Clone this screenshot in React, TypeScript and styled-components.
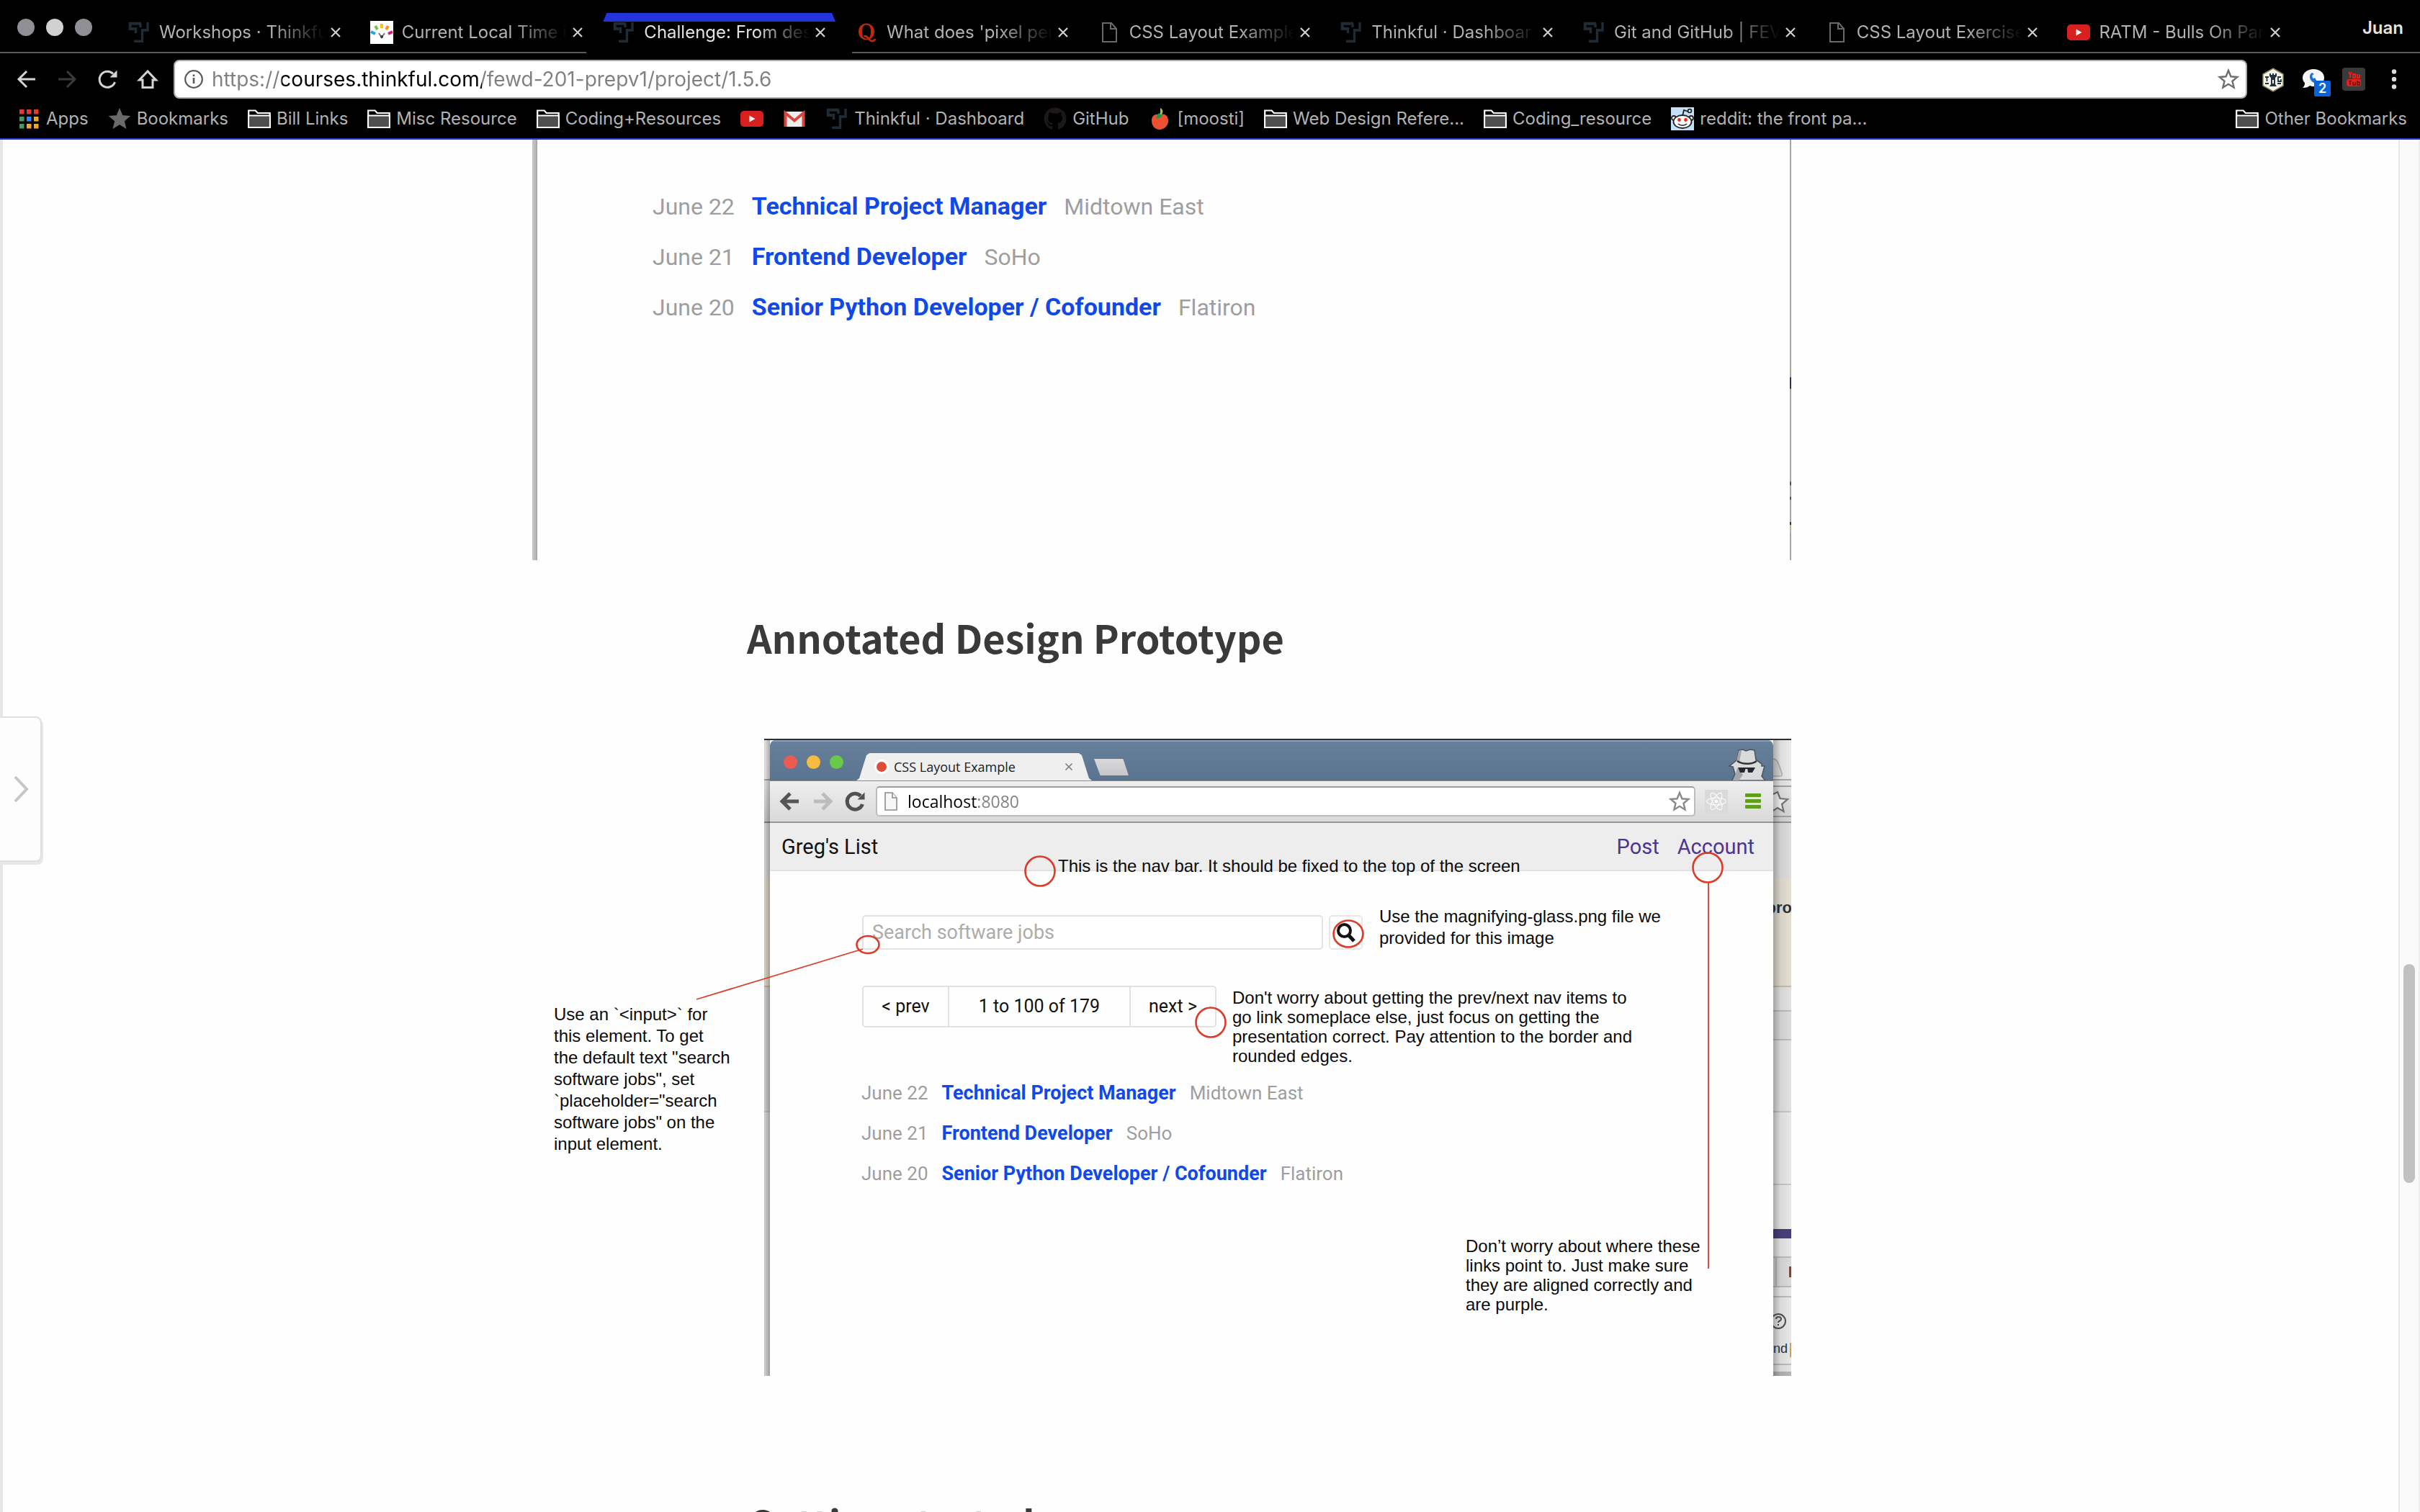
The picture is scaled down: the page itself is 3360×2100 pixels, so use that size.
import React from 'react';
import styled, { createGlobalStyle, css } from 'styled-components';
import { FaGithub, FaReact } from 'react-icons/fa';

const ui = `Inter, "Liberation Sans", sans-serif`;
const roboto = `Roboto, "Liberation Sans", sans-serif`;
const arial = `"Liberation Sans", Arial, sans-serif`;
const humanist = `"Open Sans", "Noto Sans", sans-serif`;
const heading = `"Noto Sans CJK SC", "Noto Sans", sans-serif`;

const GlobalStyle = createGlobalStyle`
  * { box-sizing: border-box; }
  html, body { margin: 0; padding: 0; background: #fefefe; }
  a { color: inherit; text-decoration: none; }
  button { border: 0; padding: 0; margin: 0; background: none; font: inherit; color: inherit; }
  svg { display: block; flex: none; }
`;

/* ---------- browser frame ---------- */

const Screen = styled.div`
  display: flex;
  flex-direction: column;
  height: 100vh;
  overflow: hidden;
  font-family: ${ui};
`;

const Chrome = styled.header`
  flex: none;
  background: #000;
  color: #b2b2b2;
  font-size: 24px;
  border-bottom: 2px solid #2a38dc;
`;

const TabStrip = styled.div`
  display: flex;
  align-items: flex-start;
  height: 74px;
  border-bottom: 2px solid #5c5c5c;
`;

const WindowButtons = styled.div`
  display: flex;
  flex: none;
  gap: 16px;
  width: 155px;
  padding: 26px 0 0 24px;
`;

const WindowDot = styled.button<{ $lit?: boolean }>`
  width: 24px;
  height: 24px;
  border-radius: 50%;
  background: ${(p) => (p.$lit ? '#d1d1d1' : '#8f8f94')};
`;

const Tabs = styled.nav`
  display: flex;
  flex: 1;
  min-width: 0;
  padding-top: 18px;
`;

const Tab = styled.div<{ $active?: boolean }>`
  position: relative;
  display: flex;
  align-items: center;
  flex: 1 1 0;
  min-width: 0;
  height: 54px;
  padding: 0 12px 0 22px;
  ${(p) =>
    p.$active &&
    css`
      color: #e2e2e2;
      &::before {
        content: '';
        position: absolute;
        top: 0;
        left: 9px;
        right: 5px;
        height: 12px;
        background: #2234da;
        clip-path: polygon(5px 0, calc(100% - 5px) 0, 100% 100%, 0 100%);
      }
      &::after {
        content: '';
        position: absolute;
        bottom: -2px;
        left: -14px;
        right: -18px;
        height: 2px;
        background: #000;
      }
    `}
`;

const TabTitle = styled.a`
  flex: 1;
  min-width: 0;
  margin-left: 12px;
  white-space: nowrap;
  line-height: 32px;
  mask-image: linear-gradient(to right, #000 calc(100% - 76px), transparent);
`;

const TabClose = styled.button`
  display: grid;
  place-items: center;
  flex: none;
  width: 28px;
  height: 28px;
`;

const Profile = styled.button`
  flex: none;
  width: 175px;
  padding-right: 23px;
  line-height: 78px;
  text-align: right;
  font-weight: 600;
  color: #e4e4e4;
`;

const Toolbar = styled.div`
  display: flex;
  align-items: center;
  gap: 24px;
  height: 72px;
  padding: 0 20px 0 21px;
`;

const IconButton = styled.button<{ $wide?: boolean }>`
  position: relative;
  display: grid;
  place-items: center;
  flex: none;
  width: ${(p) => (p.$wide ? 44 : 32)}px;
  height: 32px;
`;

const CountBadge = styled.span`
  position: absolute;
  left: 17px;
  top: 18px;
  width: 23px;
  border-radius: 2px;
  background: #0b63dc;
  color: #fff;
  font-size: 18px;
  font-weight: 600;
  line-height: 22px;
  text-align: center;
`;

const AddressBar = styled.label`
  display: flex;
  align-items: center;
  flex: 1;
  gap: 12px;
  height: 54px;
  margin: 0 -4px;
  padding: 0 8px 0 13px;
  border: 2px solid #a9adab;
  border-radius: 8px;
  background: #fff;
`;

const UrlInput = styled.input<{ $from: number; $to: number; $size: number; $font: string }>`
  flex: 1;
  min-width: 0;
  border: 0;
  padding: 0;
  outline: none;
  font-family: ${(p) => p.$font};
  font-size: ${(p) => p.$size}px;
  line-height: 36px;
  color: transparent;
  background: linear-gradient(
    to right,
    #808080 ${(p) => p.$from}px,
    #000 ${(p) => p.$from}px,
    #000 ${(p) => p.$to}px,
    #808080 ${(p) => p.$to}px
  );
  background-clip: text;
  -webkit-background-clip: text;
`;

const BookmarksBar = styled.nav`
  display: flex;
  align-items: center;
  gap: 27px;
  height: 46px;
  padding: 0 18px 8px 24px;
`;

const Bookmark = styled.a<{ $last?: boolean }>`
  display: flex;
  align-items: center;
  gap: 8px;
  line-height: 32px;
  white-space: nowrap;
  margin-left: ${(p) => (p.$last ? 'auto' : '0')};
`;

/* ---------- page ---------- */

const Page = styled.div`
  position: relative;
  display: flex;
  flex: 1;
  min-height: 0;
  background: #fefefe;
`;

const PageEdge = styled.div`
  width: 4px;
  background: #e5e5e5;
`;

const Main = styled.main`
  display: grid;
  grid-template-columns: 735fr 1748fr 843fr;
  align-items: start;
  flex: 1;
  min-width: 0;
  overflow: hidden;
`;

const Article = styled.article`
  grid-column: 2;
  min-width: 0;
`;

const DrawerHandle = styled.button`
  position: absolute;
  left: 0;
  top: 42%;
  display: grid;
  place-items: center;
  width: 58px;
  height: 202px;
  border: 2px solid #e0e0e0;
  border-left: 0;
  border-radius: 0 8px 8px 0;
  background: #fdfdfd;
  box-shadow: 2px 4px 0 #e8e8e8;
`;

const ScrollTrack = styled.div`
  display: grid;
  grid-template-rows: 1145fr 304fr 457fr;
  justify-content: center;
  width: 30px;
  border-left: 2px solid #e8e8e8;
  border-right: 2px solid #efefef;
  background: #fafafa;
`;

const ScrollThumb = styled.div`
  grid-row: 2;
  width: 16px;
  border-radius: 8px;
  background: #c1c1c1;
`;

const SectionTitle = styled.h2`
  margin: 0;
  padding: 67px 0 101px 298px;
  font-family: ${heading};
  font-size: 54px;
  font-weight: 700;
  line-height: 80px;
  color: #3a3b38;
  white-space: nowrap;
`;

const PlainFigure = styled.figure`
  display: grid;
  grid-template-columns: 7px 1fr 2px;
  height: 584px;
  margin: 0;
`;

const LeftRail = styled.div`
  background: linear-gradient(to right, #c6c6c6, #b8b8b8 70%, #9c9c9c);
`;

const RightRail = styled.div`
  background: linear-gradient(
    to bottom,
    #a6a6a6 330px, #332c5c 330px, #332c5c 346px,
    #a6a6a6 346px, #a6a6a6 475px, #555 475px, #555 480px,
    #a6a6a6 480px, #a6a6a6 496px, #555 496px, #555 500px,
    #a6a6a6 500px, #a6a6a6 531px, #333 531px, #333 535px,
    #bdb48f 535px, #bdb48f 545px, #a6a6a6 545px
  );
`;

/* ---------- job list, in two scales ---------- */

const JobList = styled.ul<{ $large?: boolean }>`
  margin: 0;
  padding: ${(p) => (p.$large ? '57px 0 0 160px' : '63px 0 0 127px')};
  list-style: none;
  font-family: ${roboto};
  line-height: ${(p) => (p.$large ? 70 : 56)}px;
  font-size: ${(p) => (p.$large ? 32 : 26)}px;
`;

const JobRow = styled.li<{ $large?: boolean }>`
  display: flex;
  align-items: baseline;
  gap: ${(p) => (p.$large ? 24 : 19)}px;
  height: ${(p) => (p.$large ? 70 : 56)}px;
  color: #9e9e9e;
  white-space: nowrap;
`;

const JobTitle = styled.a<{ $large?: boolean }>`
  font-size: ${(p) => (p.$large ? 34 : 27)}px;
  font-weight: 700;
  color: #1149e8;
`;

/* ---------- annotated prototype ---------- */

const AnnotatedFigure = styled.figure`
  position: relative;
  display: grid;
  grid-template-columns: 8px 1fr 25px;
  height: 885px;
  margin: 0 0 97px 322px;
  border-top: 2px solid #2c3034;
`;

const Backdrop = styled.div<{ $right?: boolean }>`
  position: relative;
  display: flex;
  flex-direction: column;
  overflow: hidden;
  font-family: ${arial};
  font-size: 22px;
  color: #333;
  background: #dcdcdc;
  &::after {
    content: '';
    position: absolute;
    inset: 0;
    background: linear-gradient(
      to ${(p) => (p.$right ? 'left' : 'right')},
      rgba(0, 0, 0, ${(p) => (p.$right ? 0.04 : 0.12)}),
      rgba(0, 0, 0, 0.1) ${(p) => (p.$right ? '60%' : '20%')},
      rgba(0, 0, 0, 0.3)
    );
  }
`;

const Slice = styled.div<{ $h: number; $bg: string; $line?: string }>`
  flex: none;
  height: ${(p) => p.$h}px;
  overflow: hidden;
  background: ${(p) => p.$bg};
  border-bottom: ${(p) => (p.$line ? `2px solid ${p.$line}` : '0')};
  white-space: nowrap;
`;

const SliceText = styled.div<{ $bold?: boolean }>`
  display: flex;
  justify-content: ${(p) => (p.$bold ? 'flex-end' : 'space-between')};
  width: 26px;
  padding-top: ${(p) => (p.$bold ? 19 : 1)}px;
  line-height: 44px;
  font-size: ${(p) => (p.$bold ? 22 : 18)}px;
  font-weight: ${(p) => (p.$bold ? 700 : 400)};
`;

const Marker = styled.span`
  width: 3px;
  height: 20px;
  margin-top: 14px;
  background: #dba55a;
`;

const MockWindow = styled.div`
  min-width: 0;
  overflow: hidden;
  border-radius: 8px 8px 0 0;
  background: #fefefe;
`;

const MockTitleBar = styled.div`
  display: flex;
  align-items: flex-end;
  height: 56px;
  padding: 0 10px 0 19px;
  background: linear-gradient(#67809c, #5a7490);
  box-shadow: inset 0 2px 0 #8ba0b6;
`;

const MockDots = styled.div`
  display: flex;
  gap: 13px;
  width: 101px;
  padding-bottom: 16px;
`;

const MockDot = styled.span<{ $color: string }>`
  width: 19px;
  height: 19px;
  border-radius: 50%;
  background: ${(p) => p.$color};
`;

const MockTab = styled.div`
  display: flex;
  align-items: center;
  width: 327px;
  height: 38px;
  padding: 0 26px 0 28px;
  gap: 10px;
  background: #efefef;
  clip-path: polygon(0 100%, 4px 92%, 14px 8%, 18px 0, 309px 0, 313px 8%, 323px 92%, 100% 100%);
  font-family: ${humanist};
  font-size: 18px;
  line-height: 24px;
  color: #222;
`;

const RecordDot = styled.span`
  width: 14px;
  height: 14px;
  border-radius: 50%;
  background: #df4d38;
  box-shadow: 0 0 0 3px #fff;
`;

const MockTabName = styled.span`
  flex: 1;
`;

const NewTab = styled.button`
  width: 48px;
  height: 23px;
  margin: 0 auto 7px 3px;
  background: linear-gradient(#d9d9db, #c6c6c9);
  clip-path: polygon(0 0, 84% 0, 100% 100%, 18% 100%);
`;

const MockToolbar = styled.div`
  display: flex;
  align-items: center;
  gap: 13px;
  height: 59px;
  padding: 0 6px 0 12px;
  background: linear-gradient(#efefef, #d9d9d9);
  border-top: 1px solid #8c8c8c;
  border-bottom: 2px solid #989898;
`;

const MockAddress = styled.label`
  display: flex;
  align-items: center;
  flex: 1;
  gap: 14px;
  height: 42px;
  padding: 0 4px 0 10px;
  border: 2px solid #bcbcbc;
  border-top-color: #9d9d9d;
  border-radius: 5px;
  background: #fff;
`;

const MockNav = styled.nav`
  display: flex;
  align-items: center;
  gap: 25px;
  height: 67px;
  padding: 0 26px 0 16px;
  background: #ededed;
  border-bottom: 2px solid #e2e2e2;
  font-family: ${roboto};
  font-size: 29px;
  line-height: 36px;
  color: #111;
`;

const Brand = styled.span`
  flex: 1;
`;

const NavLink = styled.a`
  color: #4c3591;
`;

const SearchRow = styled.form`
  display: flex;
  gap: 8px;
  padding: 61px 0 0 128px;
`;

const SearchInput = styled.input`
  width: 640px;
  height: 48px;
  padding: 0 12px;
  border: 2px solid #e2e2e2;
  border-radius: 5px;
  background: #fff;
  font-family: ${roboto};
  font-size: 27px;
  &::placeholder {
    color: #acacac;
    opacity: 1;
  }
`;

const SearchButton = styled.button`
  display: grid;
  place-items: center;
  width: 47px;
  height: 48px;
  border: 2px solid #e8e8e8;
  border-radius: 5px;
`;

const Pager = styled.div`
  display: flex;
  width: 492px;
  height: 58px;
  margin: 50px 0 0 128px;
  border: 2px solid #e2e2e2;
  border-radius: 5px;
  font-family: ${roboto};
  font-size: 25px;
  line-height: 54px;
  color: #111;
  text-align: center;
`;

const PagerButton = styled.button`
  width: 117px;
`;

const PagerStatus = styled.span`
  flex: 1;
  border: solid #e2e2e2;
  border-width: 0 2px;
`;

const Markup = styled.svg`
  position: absolute;
  left: 0;
  top: -2px;
  overflow: visible;
`;

/* notes are pinned on the figure at the spot they talk about */
const Note = styled.p<{ $x: number; $y: number; $w: number; $loose?: boolean }>`
  position: absolute;
  left: ${(p) => p.$x}px;
  top: ${(p) => p.$y}px;
  width: ${(p) => p.$w}px;
  margin: 0;
  font-family: ${arial};
  font-size: 24px;
  line-height: ${(p) => (p.$loose ? 30 : 27)}px;
  color: #0a0a0a;
  white-space: pre-line;
`;

/* ---------- icons ---------- */

const ThinkfulIcon = () => (
  <svg width="32" height="32" viewBox="0 0 32 32" fill="none" stroke="#1f2c36" strokeWidth="3.4">
    <path d="M19 3.7H3.7V11H11" strokeWidth="4" />
    <path d="M18 3.7V9M22 13h6V2M20.5 11v17.3H9" />
    <path d="M11.5 9v8" />
  </svg>
);

const ClockIcon = () => (
  <svg width="32" height="32" viewBox="0 0 32 32">
    <rect width="32" height="32" fill="#fff" />
    <g strokeWidth="4">
      <path d="M16 4v6" stroke="#fdc20f" />
      <path d="M7 7l3 5" stroke="#7ac143" />
      <path d="M25 7l-3 5" stroke="#f7941e" />
      <path d="M1 15l6 3" stroke="#1ea7e1" />
      <path d="M31 15l-6 3" stroke="#e6177c" />
    </g>
    <path d="M12 17l4 6 4-6" fill="none" stroke="#777" strokeWidth="2" />
    <circle cx="16" cy="22" r="2" fill="#333" />
  </svg>
);

const QuoraIcon = () => (
  <svg width="32" height="32" viewBox="0 0 32 32" fill="none" stroke="#b92b0c">
    <path
      d="M16 3.500c6.500 0 11 5 11 11.500s-4.500 11.500-11 11.500S5 21.500 5 15 9.500 3.500 16 3.500zM16 5.500c-4 0-6 3-6 9.500s2 9.500 6 9.500 6-3 6-9.500-2-9.500-6-9.500z"
      fill="#b92b0c"
      fillRule="evenodd"
      stroke="none"
    />
    <path d="M12.500 21.500c6-3 6 7.500 12 6.500 2 0 3-1 3.500-3" strokeWidth="2.800" />
  </svg>
);

const PageIcon = ({ stroke = '#6a6a6a', fill = 'none' }: { stroke?: string; fill?: string }) => (
  <svg width="32" height="32" viewBox="0 0 32 32" fill={fill} stroke={stroke} strokeWidth="2">
    <path d="M7 3h12l7 8v18H7z" />
    <path d="M18 3v8h8" />
  </svg>
);

const YouTubeIcon = () => (
  <svg width="32" height="32" viewBox="0 0 32 32">
    <rect y="5" width="32" height="22" rx="5" fill="#d8211f" />
    <path d="M12.500 11.500v9l8-4.500z" fill="#fff" />
  </svg>
);

const CrossIcon = ({ size = 16, color = '#d0d0d0' }: { size?: number; color?: string }) => (
  <svg width={size} height={size} viewBox="0 0 16 16" stroke={color} strokeWidth="2.2">
    <path d="M2 2l12 12M14 2L2 14" />
  </svg>
);

const ArrowIcon = ({ flip, color, width = 3 }: { flip?: boolean; color: string; width?: number }) => (
  <svg width="32" height="32" viewBox="0 0 32 32" fill="none" stroke={color} strokeWidth={width}>
    <path d={flip ? 'M4 16h22M16 5l11 11-11 11' : 'M28 16H6M16 5L5 16l11 11'} />
  </svg>
);

const ReloadIcon = ({ color, width = 3 }: { color: string; width?: number }) => (
  <svg width="32" height="32" viewBox="0 0 32 32" fill="none" stroke={color} strokeWidth={width}>
    <path d="M26.500 20A11 11 0 1 1 24 8.500" />
    <path d="M29.500 3.500v10h-10z" fill={color} stroke="none" />
  </svg>
);

const HomeIcon = () => (
  <svg width="32" height="32" viewBox="0 0 32 32" fill="none" stroke="#d4d4d4" strokeWidth="3">
    <path d="M16 5L4.500 17H9v10.500h14V17h4.500z" />
  </svg>
);

const InfoIcon = () => (
  <svg width="26" height="26" viewBox="0 0 26 26" fill="none" stroke="#5a5a5a" strokeWidth="2.2">
    <circle cx="13" cy="13" r="11.800" />
    <path d="M13 11v8M13 6.500v2.500" strokeWidth="2.600" />
  </svg>
);

const StarIcon = ({ fill = 'none', stroke = '#6e6e6e' }: { fill?: string; stroke?: string }) => (
  <svg width="32" height="32" viewBox="0 0 32 32" fill={fill} stroke={stroke} strokeWidth="2.4">
    <path d="M16 4l3.400 8.300 8.900.7-6.800 5.800 2.100 8.700-7.600-4.700-7.600 4.700 2.100-8.700-6.800-5.800 8.900-.7z" />
  </svg>
);

const CastleIcon = () => (
  <svg width="32" height="34" viewBox="0 0 32 34">
    <path d="M16 1l14 8v16l-14 8-14-8V9z" fill="#f4f4ee" stroke="#8d8253" strokeWidth="1.500" />
    <path d="M11 8h2v2h2V8h2v2h2V8h2v4l-2 2v9l2 3H11l2-3v-9l-2-2z" fill="#25313c" />
    <path d="M5 13h5M7.500 13v6M27 13h-4v6h4v-3M5 22h5M22 22h5" stroke="#25313c" strokeWidth="1.800" fill="none" />
    <path d="M16 17v5" stroke="#fff" strokeWidth="2" />
  </svg>
);

const ChatIcon = () => (
  <svg width="32" height="32" viewBox="0 0 32 32">
    <path d="M16 2c9 0 15 5 15 12s-6 12-13 12c-3 0-5 0-7-1-2 2-5 3-10 3 3-3 3-5 3-7-2-2-3-4-3-7C1 7 8 2 16 2z" fill="#f7f7f7" />
    <path d="M14 7c-5 3-4 11 3 14l4-2-3-5-2 1c-2-2-2-3-1-5l2-1z" fill="#1e6fd6" />
  </svg>
);

const DownloaderIcon = () => (
  <svg width="32" height="32" viewBox="0 0 32 32">
    <rect width="32" height="32" rx="4" fill="#3a3a3c" />
    <path d="M9 6l2 4v4M13 6l-2 4M15 9h3v5h-3zM21 9v5h3V9" stroke="#e0221c" strokeWidth="2" fill="none" />
    <rect x="6" y="16" width="20" height="10" rx="3" fill="#e0221c" />
    <path d="M9 18.500h4M11 18.500V24M15 20v4h3v-4M21 18v6h3v-4h-3" stroke="#6b1512" strokeWidth="1.500" fill="none" />
  </svg>
);

const DotsIcon = () => (
  <svg width="32" height="32" viewBox="0 0 32 32" fill="#dcdcdc">
    <circle cx="16" cy="5.500" r="3.200" />
    <circle cx="16" cy="16" r="3.200" />
    <circle cx="16" cy="26.500" r="3.200" />
  </svg>
);

const AppsIcon = () => (
  <svg width="32" height="32" viewBox="0 0 32 32">
    {['#e8372b', '#e8372b', '#e8372b', '#3f9c5b', '#2d8cf0', '#efa62b', '#3f9c5b', '#efa62b', '#efa62b'].map((c, i) => (
      <rect key={i} x={3 + (i % 3) * 10} y={3 + Math.floor(i / 3) * 10} width="6.500" height="6.500" fill={c} />
    ))}
  </svg>
);

const FolderIcon = () => (
  <svg width="32" height="32" viewBox="0 0 32 32">
    <path d="M1.200 27.500V4.500h9.500l3 3.500h17v19.500z" fill="#000" stroke="#fff" strokeWidth="2.200" />
    <path d="M1 11.500h30V28H1z" fill="#4f4f4f" stroke="#fff" strokeWidth="2.200" />
  </svg>
);

const GmailIcon = () => (
  <svg width="32" height="32" viewBox="0 0 32 32">
    <rect x="2" y="6" width="28" height="21" rx="2" fill="#ececec" />
    <path d="M3.500 27V8L16 18.500 28.500 8v19" fill="none" stroke="#d9453a" strokeWidth="4" />
  </svg>
);

const PeachIcon = () => (
  <svg width="32" height="32" viewBox="0 0 32 32">
    <path d="M16 10c9-2 12 3 12 9 0 7-6 12-12 12S5 26 5 19s4-10 11-9z" fill="#ee5131" />
    <path d="M11 16c1-6 3-8 7-8 3 3 2 7-7 8z" fill="#1c9a47" />
    <path d="M17 10V1c4 2 4 5 2 9z" fill="#a8c63d" />
  </svg>
);

const RedditIcon = () => (
  <svg width="32" height="32" viewBox="0 0 32 32">
    <rect width="32" height="32" fill="#c5dff6" />
    <g fill="#fff" stroke="#222" strokeWidth="1.800">
      <path d="M16 12l2-8 6 2" fill="none" />
      <circle cx="26" cy="5" r="2.400" />
      <circle cx="4" cy="15" r="3" />
      <circle cx="28" cy="15" r="3" />
      <ellipse cx="16" cy="20" rx="12.500" ry="9" />
    </g>
    <circle cx="11.500" cy="17.500" r="2.400" fill="#f02a12" />
    <circle cx="20.500" cy="17.500" r="2.400" fill="#f02a12" />
    <path d="M10 23c3 3 9 3 12 0" fill="none" stroke="#222" strokeWidth="1.600" />
  </svg>
);

const IncognitoIcon = () => (
  <svg width="52" height="44" viewBox="0 0 52 44">
    <path d="M14 2l6-1 4 2 6-2 6 1 2 13 8 6v3l4 0-3 11-1 3 5 6H5l4-9-3-10-5-1 4-3 7-6z" fill="#d9dadb" stroke="#4c5661" strokeWidth="1.600" />
    <path d="M14 3l4-1-3 16-4-1zM12 26l8 10-6 8H6l4-9z" fill="#a3a5a8" />
    <path d="M12 17c8 5 20 5 27 0" stroke="#333" strokeWidth="2.400" fill="none" />
    <path d="M13 26h11l-2 7h-6zM26 26h11l-4 7h-6z" fill="#24272b" />
    <path d="M23 27h4" stroke="#24272b" strokeWidth="2" />
  </svg>
);

const MenuIcon = () => (
  <svg width="22" height="24" viewBox="0 0 22 24" fill="#5f9f1c">
    <rect y="1" width="22" height="5" rx="1" />
    <rect y="9" width="22" height="5" rx="1" />
    <rect y="17" width="22" height="5" rx="1" />
  </svg>
);

const MagnifierIcon = () => (
  <svg width="28" height="28" viewBox="0 0 28 28" fill="none" stroke="#111">
    <circle cx="11.500" cy="11.500" r="8.500" strokeWidth="4" />
    <path d="M17.500 18l7.500 8" strokeWidth="5" />
  </svg>
);

/* ---------- data ---------- */

const tabs = [
  { title: 'Workshops · Thinkfu', icon: <ThinkfulIcon /> },
  { title: 'Current Local Time i', icon: <ClockIcon /> },
  { title: 'Challenge: From des', icon: <ThinkfulIcon />, active: true },
  { title: "What does 'pixel per", icon: <QuoraIcon /> },
  { title: 'CSS Layout Example', icon: <PageIcon /> },
  { title: 'Thinkful · Dashboar', icon: <ThinkfulIcon /> },
  { title: 'Git and GitHub | FEV', icon: <ThinkfulIcon /> },
  { title: 'CSS Layout Exercise', icon: <PageIcon /> },
  { title: 'RATM - Bulls On Par', icon: <YouTubeIcon /> },
];

const bookmarks = [
  { label: 'Apps', icon: <AppsIcon /> },
  { label: 'Bookmarks', icon: <StarIcon fill="#6a6a6a" stroke="#6a6a6a" /> },
  { label: 'Bill Links', icon: <FolderIcon /> },
  { label: 'Misc Resource', icon: <FolderIcon /> },
  { label: 'Coding+Resources', icon: <FolderIcon /> },
  { label: '', icon: <YouTubeIcon /> },
  { label: '', icon: <GmailIcon /> },
  { label: 'Thinkful · Dashboard', icon: <ThinkfulIcon /> },
  { label: 'GitHub', icon: <FaGithub size={32} color="#1b1817" /> },
  { label: '[moosti]', icon: <PeachIcon /> },
  { label: 'Web Design Refere...', icon: <FolderIcon /> },
  { label: 'Coding_resource', icon: <FolderIcon /> },
  { label: 'reddit: the front pa...', icon: <RedditIcon /> },
];

const jobs = [
  { date: 'June 22', title: 'Technical Project Manager', place: 'Midtown East' },
  { date: 'June 21', title: 'Frontend Developer', place: 'SoHo' },
  { date: 'June 20', title: 'Senior Python Developer / Cofounder', place: 'Flatiron' },
];

const Jobs = ({ large }: { large?: boolean }) => (
  <JobList $large={large}>
    {jobs.map((job) => (
      <JobRow key={job.date} $large={large}>
        <span>{job.date}</span>
        <JobTitle href="#" $large={large}>{job.title}</JobTitle>
        <span>{job.place}</span>
      </JobRow>
    ))}
  </JobList>
);

const Prototype = () => (
  <AnnotatedFigure>
    <Backdrop>
      <Slice $h={56} $bg="#f4f4f4" $line="#aaa" />
      <Slice $h={59} $bg="linear-gradient(#efefef, #d0d0d0)" $line="#888" />
      <Slice $h={77} $bg="#dedede" />
      <Slice $h={151} $bg="#e6e0cf" $line="#c5bda3" />
      <Slice $h={174} $bg="#d8d8d8" $line="#c8c8c8" />
      <Slice $h={366} $bg="#e0e0e0" />
    </Backdrop>

    <MockWindow>
      <MockTitleBar>
        <MockDots>
          <MockDot $color="#ec5a52" />
          <MockDot $color="#f6bb3f" />
          <MockDot $color="#69c948" />
        </MockDots>
        <MockTab>
          <RecordDot />
          <MockTabName>CSS Layout Example</MockTabName>
          <CrossIcon size={12} color="#7d7d7d" />
        </MockTab>
        <NewTab aria-label="New tab" />
        <IncognitoIcon />
      </MockTitleBar>
      <MockToolbar>
        <IconButton aria-label="Back"><ArrowIcon color="#555" width={5} /></IconButton>
        <IconButton aria-label="Forward"><ArrowIcon flip color="#bcbcbc" width={5} /></IconButton>
        <IconButton aria-label="Reload"><ReloadIcon color="#505050" width={5} /></IconButton>
        <MockAddress>
          <svg width="18" height="26" viewBox="0 0 18 26" fill="#f7f7f7" stroke="#8c8c8c" strokeWidth="1.600">
            <path d="M1 1h10l6 7v17H1z" />
            <path d="M11 1v7h6" />
          </svg>
          <UrlInput aria-label="Prototype address" defaultValue="localhost:8080" $from={0} $to={98} $size={23} $font={humanist} />
          <StarIcon stroke="#8a8a8a" />
        </MockAddress>
        <IconButton aria-label="React tools">
          <svg width="32" height="32"><rect width="32" height="32" fill="#dadada" /><FaReact size={28} x={2} y={2} color="#fafafa" /></svg>
        </IconButton>
        <IconButton $wide aria-label="Menu"><MenuIcon /></IconButton>
      </MockToolbar>
      <MockNav>
        <Brand>Greg's List</Brand>
        <NavLink href="#">Post</NavLink>
        <NavLink href="#">Account</NavLink>
      </MockNav>
      <SearchRow>
        <SearchInput aria-label="Search software jobs" placeholder="Search software jobs" />
        <SearchButton type="button" aria-label="Search"><MagnifierIcon /></SearchButton>
      </SearchRow>
      <Pager>
        <PagerButton>&lt; prev</PagerButton>
        <PagerStatus>1 to 100 of 179</PagerStatus>
        <PagerButton>next &gt;</PagerButton>
      </Pager>
      <Jobs />
    </MockWindow>

    <Backdrop $right>
      <Slice $h={56} $bg="#f4f4f4" $line="#b0b0b0">
        <svg width="25" height="54" viewBox="0 0 25 54" fill="#e6e6e6" stroke="#b5b5b5" strokeWidth="1.500">
          <path d="M0 26c5 0 6 2 12 20 1 3 0 4-3 4H0" />
        </svg>
      </Slice>
      <Slice $h={59} $bg="linear-gradient(#f2f2f2, #dcdcdc)" $line="#999">
        <svg width="25" height="57" viewBox="0 0 25 57" fill="#fff" stroke="#7a7a7a" strokeWidth="2.200">
          <path d="M-5 8h40M-5 50h40" stroke="#aaa" />
          <path d="M6 16l3.500 9 10.500 1-8 7 2.500 10-8.500-5-8 5V20z" />
        </svg>
      </Slice>
      <Slice $h={77} $bg="#e6e6e6" />
      <Slice $h={151} $bg="#eee8da" $line="#cdc6b0"><SliceText $bold>pro</SliceText></Slice>
      <Slice $h={34} $bg="#ececec" $line="#c4c4c4" />
      <Slice $h={40} $bg="#e4e4e4" $line="#c4c4c4" />
      <Slice $h={100} $bg="#ececec" $line="#cfcfcf" />
      <Slice $h={101} $bg="#f2f2f2" $line="#cfcfcf" />
      <Slice $h={61} $bg="#f2f2f2" />
      <Slice $h={13} $bg="#4b4382" />
      <Slice $h={27} $bg="#f2f2f2" $line="#c4c4c4" />
      <Slice $h={41} $bg="#e4e4e4" $line="#c4c4c4">
        <svg width="25" height="39" viewBox="0 0 25 39">
          <path d="M4 0v39" stroke="#c4c4c4" strokeWidth="2" />
          <rect x="22" y="12" width="3" height="15" fill="#7a4a42" />
        </svg>
      </Slice>
      <Slice $h={14} $bg="#f2f2f2" $line="#c4c4c4" />
      <Slice $h={48} $bg="#f2f2f2">
        <svg width="25" height="48" viewBox="0 0 25 48" fill="none" stroke="#555" strokeWidth="2">
          <circle cx="7" cy="33" r="10" />
          <path d="M4 30c0-4 7-4 7 0 0 3-4 2-4 5M7 37v2" />
        </svg>
      </Slice>
      <Slice $h={46} $bg="#f2f2f2" $line="#c4c4c4"><SliceText>nd<Marker /></SliceText></Slice>
      <Slice $h={9} $bg="#eee" />
      <Slice $h={20} $bg="#bdbdbd" />
    </Backdrop>

    <Markup width="1426" height="885" fill="none" stroke="#dd3a27" strokeWidth="2.600">
      <circle cx="383" cy="184" r="20.500" />
      <ellipse cx="144" cy="286" rx="15.500" ry="12" />
      <ellipse cx="811" cy="271" rx="20.500" ry="18.500" />
      <circle cx="620" cy="394" r="20.500" />
      <circle cx="1310" cy="179" r="20.500" />
      <path d="M1311 200V736M137 292L-94 362" strokeWidth="1.800" />
    </Markup>

    <Note $x={408} $y={161} $w={700}>This is the nav bar. It should be fixed to the top of the screen</Note>
    <Note $x={854} $y={230} $w={440} $loose>{'Use the magnifying-glass.png file we\nprovided for this image'}</Note>
    <Note $x={650} $y={344} $w={600}>
      {"Don't worry about getting the prev/next nav items to\ngo link someplace else, just focus on getting the\npresentation correct. Pay attention to the border and\nrounded edges."}
    </Note>
    <Note $x={974} $y={689} $w={345}>
      {'Don’t worry about where these\nlinks point to. Just make sure\nthey are aligned correctly and\nare purple.'}
    </Note>
    <Note $x={-292} $y={366} $w={270} $loose>
      {'Use an `<input>` for\nthis element. To get\nthe default text "search\nsoftware jobs", set\n`placeholder="search\nsoftware jobs" on the\ninput element.'}
    </Note>
  </AnnotatedFigure>
);

export default function App() {
  return (
    <Screen>
      <GlobalStyle />
      <Chrome>
        <TabStrip>
          <WindowButtons>
            <WindowDot aria-label="Close" />
            <WindowDot aria-label="Minimise" $lit />
            <WindowDot aria-label="Zoom" />
          </WindowButtons>
          <Tabs>
            {tabs.map((tab) => (
              <Tab key={tab.title} $active={tab.active}>
                {tab.icon}
                <TabTitle href="#">{tab.title}</TabTitle>
                <TabClose aria-label={`Close ${tab.title}`}><CrossIcon /></TabClose>
              </Tab>
            ))}
          </Tabs>
          <Profile>Juan</Profile>
        </TabStrip>
        <Toolbar>
          <IconButton aria-label="Back"><ArrowIcon color="#d4d4d4" /></IconButton>
          <IconButton aria-label="Forward"><ArrowIcon flip color="#3a3a3a" /></IconButton>
          <IconButton aria-label="Reload"><ReloadIcon color="#d4d4d4" /></IconButton>
          <IconButton aria-label="Home"><HomeIcon /></IconButton>
          <AddressBar>
            <InfoIcon />
            <UrlInput
              aria-label="Address"
              defaultValue="https://courses.thinkful.com/fewd-201-prepv1/project/1.5.6"
              $from={97}
              $to={375}
              $size={28}
              $font={ui}
            />
            <StarIcon />
          </AddressBar>
          <IconButton aria-label="Castle"><CastleIcon /></IconButton>
          <IconButton aria-label="Calls"><ChatIcon /><CountBadge>2</CountBadge></IconButton>
          <IconButton aria-label="Video downloader"><DownloaderIcon /></IconButton>
          <IconButton aria-label="Menu"><DotsIcon /></IconButton>
        </Toolbar>
        <BookmarksBar>
          {bookmarks.map((b, i) => (
            <Bookmark key={i} href="#">
              {b.icon}
              {b.label && <span>{b.label}</span>}
            </Bookmark>
          ))}
          <Bookmark href="#" $last>
            <FolderIcon />
            <span>Other Bookmarks</span>
          </Bookmark>
        </BookmarksBar>
      </Chrome>

      <Page>
        <PageEdge />
        <Main>
          <Article>
            <PlainFigure>
              <LeftRail />
              <Jobs large />
              <RightRail />
            </PlainFigure>
            <SectionTitle>Annotated Design Prototype</SectionTitle>
            <Prototype />
            <SectionTitle>Getting started</SectionTitle>
          </Article>
        </Main>
        <ScrollTrack>
          <ScrollThumb />
        </ScrollTrack>
        <DrawerHandle aria-label="Open the sidebar">
          <svg width="24" height="40" viewBox="0 0 24 40" fill="none" stroke="#c4c6c9" strokeWidth="4">
            <path d="M5 3l16 17L5 37" />
          </svg>
        </DrawerHandle>
      </Page>
    </Screen>
  );
}
